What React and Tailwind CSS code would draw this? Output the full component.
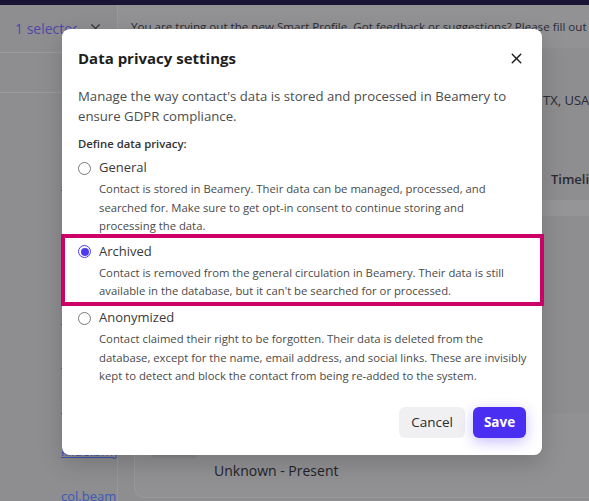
import React from 'react';
import { X } from 'lucide-react';

const options = [
  {
    id: 'general',
    label: 'General',
    text: 'Contact is stored in Beamery. Their data can be managed, processed, and searched for. Make sure to get opt-in consent to continue storing and processing the data.',
    wrap: 'pr-[12px]',
  },
  {
    id: 'archived',
    label: 'Archived',
    text: "Contact is removed from the general circulation in Beamery. Their data is still available in the database, but it can't be searched for or processed.",
    wrap: '',
  },
  {
    id: 'anonymized',
    label: 'Anonymized',
    text: 'Contact claimed their right to be forgotten. Their data is deleted from the database, except for the name, email address, and social links. These are invisibly kept to detect and block the contact from being re-added to the system.',
    wrap: 'mr-[-5px]',
  },
];

const Radio = ({ checked }) =>
  checked ? (
    <span className="w-[13px] h-[13px] rounded-full border border-[#4b3af2] flex items-center justify-center shrink-0">
      <span className="w-[8px] h-[8px] rounded-full bg-[#4b3af2]" />
    </span>
  ) : (
    <span className="w-[13px] h-[13px] rounded-full border border-[#7a7a7a] bg-white shrink-0" />
  );

const Option = ({ option, checked }) => (
  <div>
    <div className="flex items-center h-[20px]">
      <span className="w-[21px] flex"><Radio checked={checked} /></span>
      <span className="text-[13px] text-[#3a3a3a]">{option.label}</span>
    </div>
    <p className={`pl-[21px] mt-[2px] text-[11.3px] leading-[18.5px] text-[#4a4a4a] ${option.wrap}`}>{option.text}</p>
  </div>
);

const App = () => {
  const selected = 'archived';

  return (
    <div
      className="relative w-[589px] h-[501px] overflow-hidden bg-[#8e8e91]"
      style={{ fontFamily: '"Open Sans", "Noto Sans", sans-serif' }}
    >
      <div className="h-[5px] bg-[#1b1535]" />
      <div className="flex h-[496px]">
        {/* left column */}
        <div className="w-[118px] shrink-0 border-r border-[#98989b] flex flex-col">
          <div className="h-[48px] flex items-center pl-[15px] pr-[14px] border-b border-[#9a9a9d]">
            <span className="text-[14px] text-[#4f48a8] whitespace-nowrap overflow-hidden w-[62px]">1 selected</span>
            <X size={15} strokeWidth={1.8} className="ml-auto text-[#333]" />
          </div>
          <div className="h-[40px] border-b border-[#9a9a9d]" />
          <div className="flex-1 pl-[61px] pt-[82px] flex flex-col gap-[25px] text-[13px] text-[#3d56b8] underline whitespace-nowrap overflow-hidden">
            <span>a.bmy</span>
            <span>b.bmy</span>
            <span>c.bmy</span>
            <span>d.bmy</span>
            <span>e.bmy</span>
            <span>f.bmy</span>
            <span>kilde.bmy</span>
            <span>col.beamery</span>
          </div>
        </div>

        {/* right column */}
        <div className="flex-1 flex flex-col min-w-0">
          <div className="h-[43px] bg-[#929295] flex items-center pl-[13px] whitespace-nowrap overflow-hidden">
            <span className="text-[11.6px] text-[#2b2b33]">
              You are trying out the new Smart Profile. Got feedback or suggestions? Please fill out
            </span>
          </div>
          <div className="h-[152px] relative">
            <span className="absolute left-[425px] top-[43px] text-[13px] text-[#2b2b33] whitespace-nowrap">TX, USA</span>
            <span className="absolute left-[433px] top-[122px] text-[13px] font-semibold text-[#2b2b33] whitespace-nowrap">Timeline</span>
          </div>
          <div className="h-[16px] bg-[#959598]" />
          <div className="flex-1 pl-[16px] pt-[198px]">
            <div className="h-[84px] rounded-bl-[10px] border-l border-b border-[#999] bg-[#919194] pl-[16px] pt-[24px]">
              <div className="w-[47px] h-[20px] rounded-[4px] bg-[#88888b]" />
              <div className="mt-[2px] pl-[63px] text-[14px] text-[#22222a]">Unknown - Present</div>
            </div>
          </div>
        </div>
      </div>

      {/* modal */}
      <div className="absolute left-[62px] top-[29px] w-[480px] rounded-[8px] bg-white shadow-[0_8px_24px_rgba(0,0,0,0.18)] pt-[17px] pb-[17px]">
        <div className="px-4 flex items-center justify-between h-[24px]">
          <h2 className="text-[15px] font-bold text-[#1e1e1e]">Data privacy settings</h2>
          <X size={17} strokeWidth={2} className="text-[#1e1e1e] mr-[1px]" />
        </div>
        <p className="px-4 mt-4 text-[13.2px] leading-[20px] text-[#4d4d4d]">
          Manage the way contact's data is stored and processed in Beamery to ensure GDPR compliance.
        </p>
        <div className="px-4 mt-[10px] text-[11.3px] leading-[16px] font-semibold text-[#333]">Define data privacy:</div>

        <div className="px-4 mt-[6px]">
          <Option option={options[0]} checked={selected === 'general'} />
        </div>
        <div className="ml-[-1px] mr-[-2px] mt-[-2px] border-[4px] border-[#cc0066] pl-[13px] pr-[14px] pt-[4px] pb-[1.5px]">
          <Option option={options[1]} checked={selected === 'archived'} />
        </div>
        <div className="px-4 mt-[2px]">
          <Option option={options[2]} checked={selected === 'anonymized'} />
        </div>

        <div className="px-4 mt-[21.5px] flex justify-end gap-2">
          <button className="h-[31px] w-[66px] rounded-[6px] bg-[#f0f0f2] text-[13.5px] text-[#2b2b2b]">Cancel</button>
          <button className="h-[31px] w-[53px] rounded-[6px] bg-[#4a2ff2] text-[13.5px] font-bold text-white shadow-[0_4px_14px_rgba(74,47,242,0.3)]">Save</button>
        </div>
      </div>
    </div>
  );
};

export default App;
